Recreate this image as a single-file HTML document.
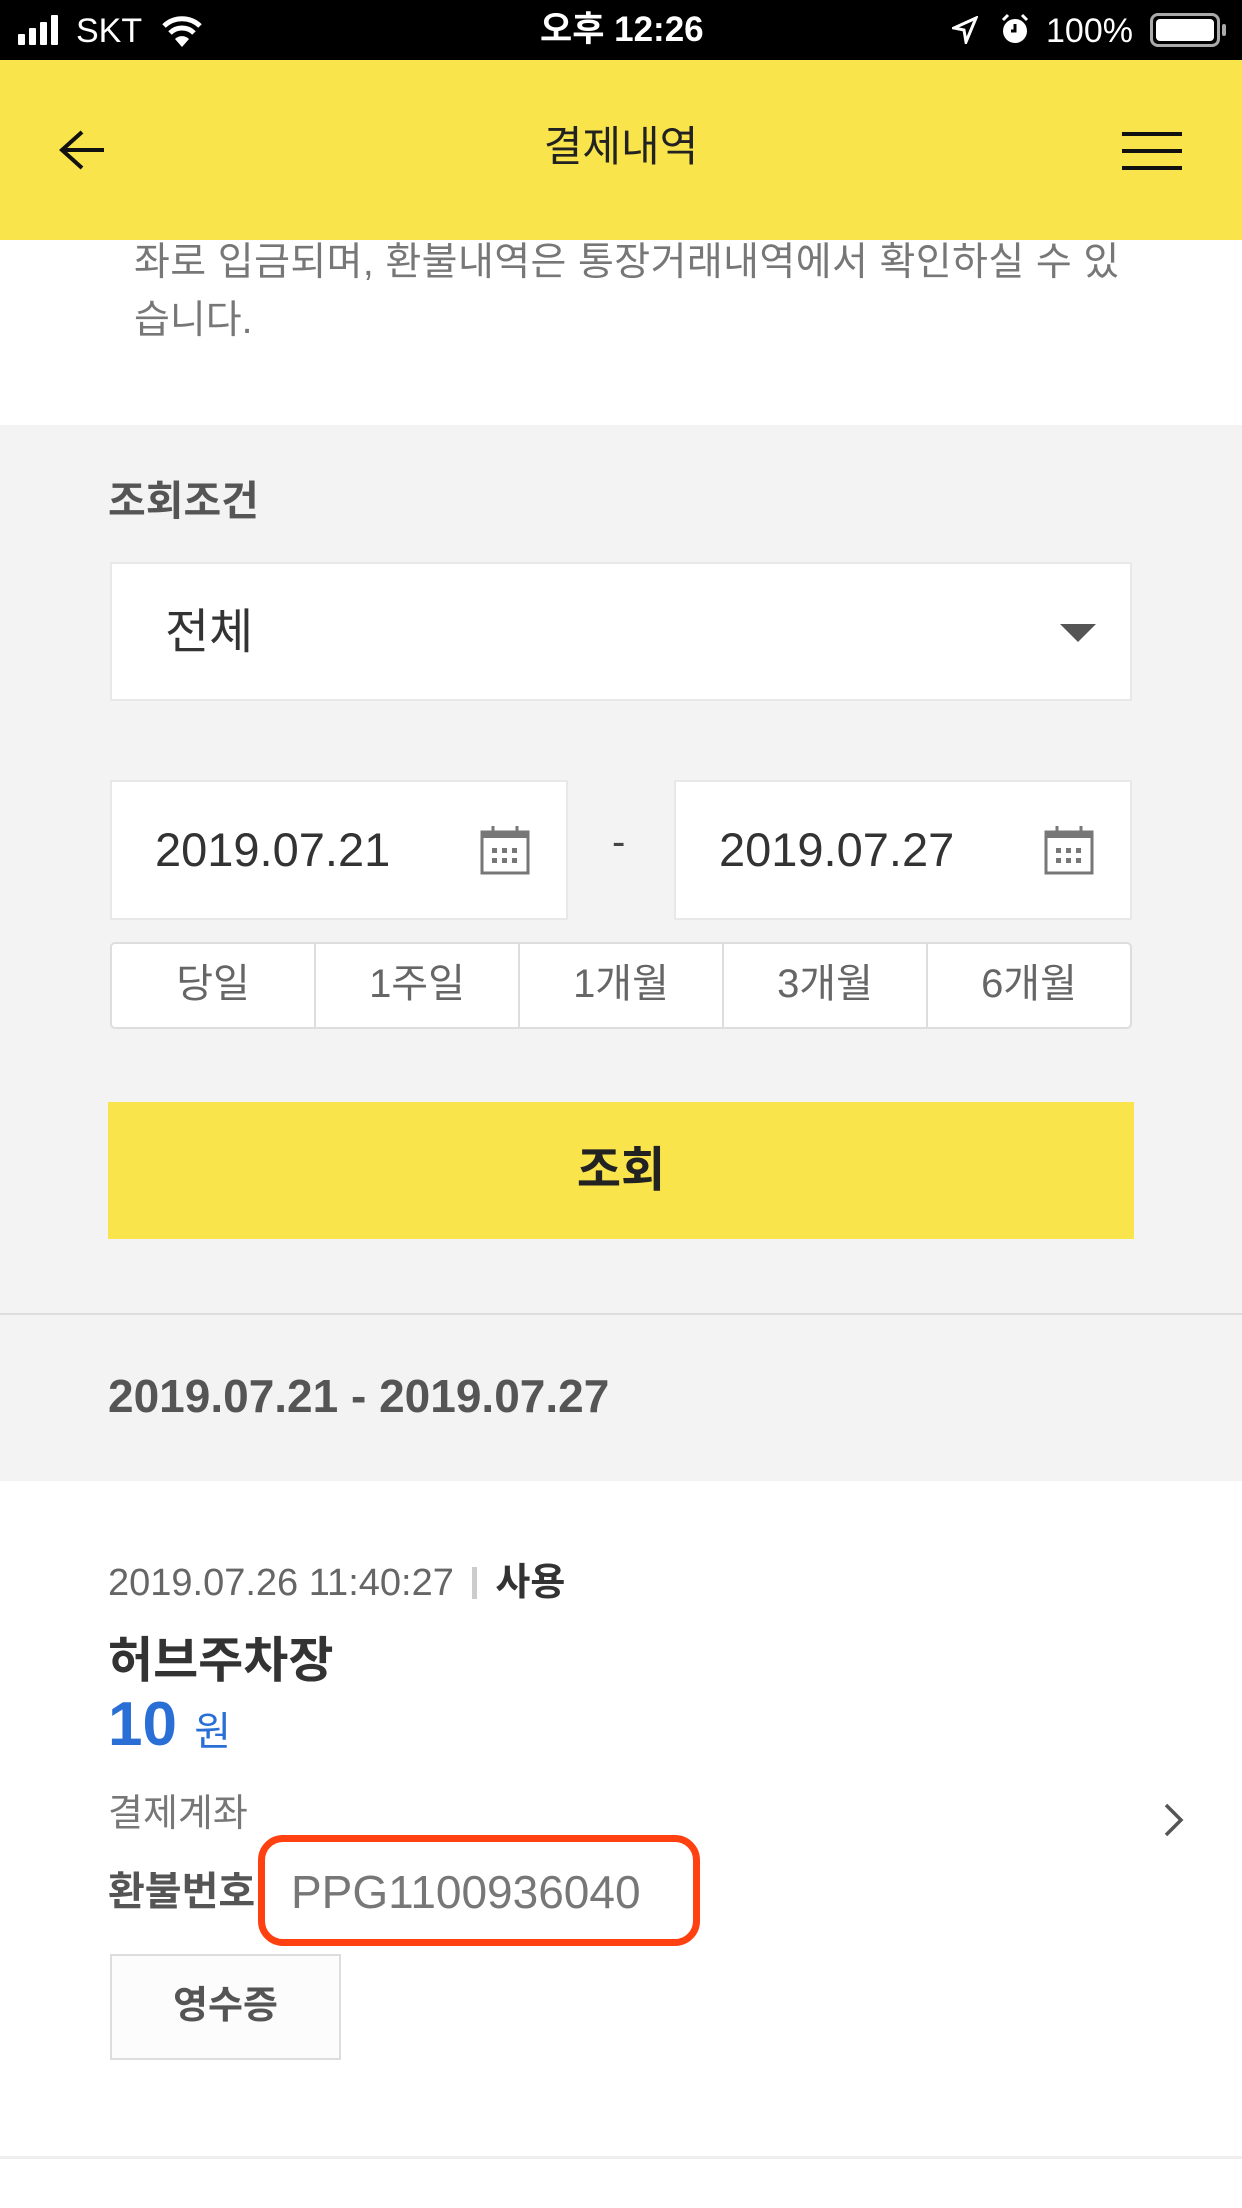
<!DOCTYPE html>
<html><head><meta charset="utf-8">
<style>
*{margin:0;padding:0;box-sizing:border-box}
body{width:1242px;height:2208px;position:relative;background:#fff;font-family:"Liberation Sans","Noto Sans CJK KR",sans-serif;overflow:hidden}
.a{position:absolute}
.t{position:absolute;white-space:nowrap;line-height:1}
</style></head><body>
<!-- status bar -->
<div class="a" style="left:0;top:0;width:1242px;height:60px;background:#000"></div>
<div class="a" style="left:18px;top:34px;width:7px;height:11px;background:#fff;border-radius:1px"></div>
<div class="a" style="left:29px;top:28px;width:7px;height:17px;background:#fff;border-radius:1px"></div>
<div class="a" style="left:40px;top:22px;width:7px;height:23px;background:#fff;border-radius:1px"></div>
<div class="a" style="left:51px;top:15px;width:7px;height:30px;background:#fff;border-radius:1px"></div>
<div class="t" style="left:76px;top:14px;font-size:34px;color:#fff">SKT</div>
<svg class="a" style="left:160px;top:14px" width="44" height="34" viewBox="0 0 44 34"><path d="M4 12 A26 26 0 0 1 40 12" stroke="#fff" stroke-width="5" fill="none"/><path d="M10 19 A17 17 0 0 1 34 19" stroke="#fff" stroke-width="5" fill="none"/><path d="M22 33 L15 25 A10 10 0 0 1 29 25 Z" fill="#fff"/></svg>
<div class="t" style="left:540px;top:12px;font-size:35px;color:#fff;font-weight:bold">오후 12:26</div>
<svg class="a" style="left:952px;top:16px" width="26" height="28" viewBox="0 0 26 28"><path d="M24 2 L2 12 L12 14 L14 26 Z" fill="none" stroke="#fff" stroke-width="3"/></svg>
<svg class="a" style="left:1000px;top:13px" width="30" height="32" viewBox="0 0 30 32"><circle cx="15" cy="18" r="12" fill="#fff"/><path d="M15 11 V18 H11" stroke="#000" stroke-width="3" fill="none"/><path d="M3 7 L8 2 M27 7 L22 2" stroke="#fff" stroke-width="3"/></svg>
<div class="t" style="left:1046px;top:14px;font-size:34px;color:#fff">100%</div>
<div class="a" style="left:1150px;top:13px;width:70px;height:34px;border:3px solid #aaa;border-radius:8px;padding:3px"><div style="width:100%;height:100%;background:#fff;border-radius:4px"></div></div>
<div class="a" style="left:1222px;top:24px;width:4px;height:12px;background:#aaa;border-radius:2px"></div>
<!-- header -->
<div class="a" style="left:0;top:60px;width:1242px;height:180px;background:#f9e44c"></div>
<svg class="a" style="left:56px;top:128px" width="52" height="44" viewBox="0 0 52 44"><path d="M26 4 L6 22 L26 40 M6 22 H48" stroke="#111" stroke-width="4" fill="none"/></svg>
<div class="t" style="left:0;width:1242px;text-align:center;top:126px;font-size:42px;color:#222">결제내역</div>
<div class="a" style="left:1122px;top:132px;width:60px;height:4px;background:#111"></div>
<div class="a" style="left:1122px;top:149px;width:60px;height:4px;background:#111"></div>
<div class="a" style="left:1122px;top:166px;width:60px;height:4px;background:#111"></div>
<!-- intro -->
<div class="t" style="left:134px;top:243px;font-size:39px;letter-spacing:0.4px;color:#777">좌로 입금되며, 환불내역은 통장거래내역에서 확인하실 수 있</div>
<div class="t" style="left:134px;top:301px;font-size:39px;color:#777">습니다.</div>
<!-- grey section -->
<div class="a" style="left:0;top:425px;width:1242px;height:1056px;background:#f3f3f3"></div>
<div class="a" style="left:0;top:1313px;width:1242px;height:2px;background:#ddd"></div>
<div class="t" style="left:108px;top:481px;font-size:41px;color:#555;font-weight:bold">조회조건</div>
<div class="a" style="left:110px;top:562px;width:1022px;height:139px;background:#fff;border:2px solid #e8e8e8"></div>
<div class="t" style="left:165px;top:609px;font-size:48px;color:#333">전체</div>
<svg class="a" style="left:1060px;top:624px" width="36" height="18" viewBox="0 0 36 18"><path d="M0 0 H36 L18 18 Z" fill="#555"/></svg>
<div class="a" style="left:110px;top:780px;width:458px;height:140px;background:#fff;border:2px solid #e8e8e8"></div>
<div class="a" style="left:674px;top:780px;width:458px;height:140px;background:#fff;border:2px solid #e8e8e8"></div>
<div class="t" style="left:155px;top:826px;font-size:47px;color:#333">2019.07.21</div>
<div class="t" style="left:719px;top:826px;font-size:47px;color:#333">2019.07.27</div>
<div class="t" style="left:612px;top:822px;font-size:40px;color:#444">-</div>
<svg class="a" style="left:479px;top:824px" width="52" height="52" viewBox="0 0 52 52"><rect x="3" y="8" width="46" height="41" fill="none" stroke="#777" stroke-width="3"/><rect x="3" y="8" width="46" height="6" fill="#777"/><path d="M14 2 V12 M38 2 V12" stroke="#777" stroke-width="3"/><g fill="#777"><rect x="13" y="24" width="5" height="5"/><rect x="23" y="24" width="5" height="5"/><rect x="33" y="24" width="5" height="5"/><rect x="13" y="34" width="5" height="5"/><rect x="23" y="34" width="5" height="5"/><rect x="33" y="34" width="5" height="5"/></g></svg>
<svg class="a" style="left:1043px;top:824px" width="52" height="52" viewBox="0 0 52 52"><rect x="3" y="8" width="46" height="41" fill="none" stroke="#777" stroke-width="3"/><rect x="3" y="8" width="46" height="6" fill="#777"/><path d="M14 2 V12 M38 2 V12" stroke="#777" stroke-width="3"/><g fill="#777"><rect x="13" y="24" width="5" height="5"/><rect x="23" y="24" width="5" height="5"/><rect x="33" y="24" width="5" height="5"/><rect x="13" y="34" width="5" height="5"/><rect x="23" y="34" width="5" height="5"/><rect x="33" y="34" width="5" height="5"/></g></svg>
<div class="a" style="left:110px;top:942px;width:1022px;height:87px;background:#fff;border:2px solid #ddd;border-radius:5px;display:flex">
<div style="flex:1;border-right:2px solid #ddd;text-align:center;font-size:40px;color:#666;line-height:80px">당일</div>
<div style="flex:1;border-right:2px solid #ddd;text-align:center;font-size:40px;color:#666;line-height:80px">1주일</div>
<div style="flex:1;border-right:2px solid #ddd;text-align:center;font-size:40px;color:#666;line-height:80px">1개월</div>
<div style="flex:1;border-right:2px solid #ddd;text-align:center;font-size:40px;color:#666;line-height:80px">3개월</div>
<div style="flex:1;text-align:center;font-size:40px;color:#666;line-height:80px">6개월</div>
</div>
<div class="a" style="left:108px;top:1102px;width:1026px;height:137px;background:#f9e44c;text-align:center;font-size:48px;font-weight:bold;color:#222;line-height:137px">조회</div>
<div class="t" style="left:108px;top:1373px;font-size:46px;color:#555;font-weight:bold">2019.07.21 - 2019.07.27</div>
<!-- item -->
<div class="t" style="left:108px;top:1564px;font-size:38px;color:#666">2019.07.26 11:40:27 <span style="display:inline-block;width:5px;height:32px;background:#ccc;vertical-align:-4px;margin:0 18px 0 8px"></span><b style="color:#333">사용</b></div>
<div class="t" style="left:108px;top:1637px;font-size:49px;color:#333;font-weight:bold">허브주차장</div>
<div class="t" style="left:108px;top:1694px;font-size:62px;color:#2a6fd6;font-weight:bold">10 <span style="font-size:40px;font-weight:normal">원</span></div>
<div class="t" style="left:108px;top:1795px;font-size:38px;color:#777">결제계좌</div>
<svg class="a" style="left:1163px;top:1802px" width="22" height="36" viewBox="0 0 22 36"><path d="M3 3 L18 18 L3 33" stroke="#555" stroke-width="3.5" fill="none"/></svg>
<div class="t" style="left:108px;top:1872px;font-size:40px;color:#555;font-weight:bold">환불번호</div>
<div class="t" style="left:291px;top:1869px;font-size:46px;color:#777">PPG1100936040</div>
<div class="a" style="left:258px;top:1835px;width:442px;height:111px;border:7px solid #ff4010;border-radius:25px"></div>
<div class="a" style="left:110px;top:1954px;width:231px;height:106px;background:#fcfcfc;border:2px solid #ddd;text-align:center;font-size:38px;color:#555;font-weight:bold;line-height:100px">영수증</div>
<div class="a" style="left:0;top:2156px;width:1242px;height:3px;background:#eee"></div>
</body></html>
